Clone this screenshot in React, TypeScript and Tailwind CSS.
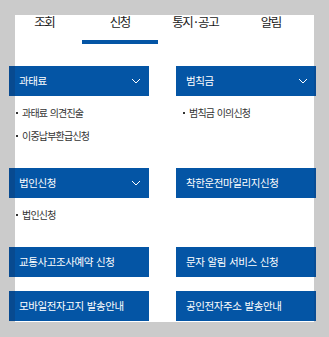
import React from "react"

const font = { fontFamily: '"Noto Sans CJK KR", "Noto Sans", sans-serif' }

function Chevron() {
  return (
    <svg className="h-[6px] w-[10px]" viewBox="0 0 10 6" fill="none" stroke="white" strokeWidth={1}>
      <path d="M1 1l4 4 4-4" />
    </svg>
  )
}

function Bar({ label, open = false, side }: { label: string; open?: boolean; side: "l" | "r" }) {
  return (
    <div
      className={`flex h-[30px] items-center justify-between bg-[#0455a5] text-[10.5px] tracking-[-0.4px] text-white [word-spacing:1px] ${
        side === "l" ? "border-l-[6px] border-[#084a90] pl-[4px] pr-[8px]" : "border-r-2 border-[#084d96] pl-[10px] pr-[6px]"
      }`}
    >
      <span>{label}</span>
      {open && <Chevron />}
    </div>
  )
}

function Items({ items }: { items: string[] }) {
  return (
    <ul className="pt-[5px] pb-[21px]">
      {items.map((item) => (
        <li key={item} className="flex h-[23px] items-center pl-[7px] text-[10px] tracking-[-0.8px] text-[#333] [word-spacing:1px]">
          <span className="mr-[4px] h-[2px] w-[2px] bg-[#333]" />
          {item}
        </li>
      ))}
    </ul>
  )
}

const tabs = ["조회", "신청", "통지·공고", "알림"]

export default function App() {
  return (
    <div className="h-[337px] w-[329px] overflow-hidden bg-[#cbcbcb] px-[15px] pt-[15px]" style={font}>
      <div className="h-[307px] w-[299px] bg-white">
        <nav className="-ml-[8.5px] flex">
          {tabs.map((tab, i) => (
            <div
              key={tab}
              className={`h-[29px] w-[75.5px] text-center text-[12.5px] leading-[13px] tracking-[-1.4px] text-[#1a1a1a] ${
                i === 1 ? "border-b-4 border-[#0455a5]" : ""
              }`}
            >
              {tab}
            </div>
          ))}
        </nav>

        <div className="-ml-[6px] mt-[22px] w-[307px]">
          <div className="grid grid-cols-[140px_140px] items-start gap-x-[27px]">
            <div>
              <Bar label="과태료" open side="l" />
              <Items items={["과태료 의견진술", "이중납부환급신청"]} />
            </div>
            <div>
              <Bar label="범칙금" open side="r" />
              <Items items={["범칙금 이의신청"]} />
            </div>
          </div>
          <div className="grid grid-cols-[140px_140px] items-start gap-x-[27px]">
            <div>
              <Bar label="법인신청" open side="l" />
              <Items items={["법인신청"]} />
            </div>
            <Bar label="착한운전마일리지신청" side="r" />
          </div>
          <div className="grid grid-cols-[140px_140px] gap-x-[27px] gap-y-[14px]">
            <Bar label="교통사고조사예약 신청" side="l" />
            <Bar label="문자 알림 서비스 신청" side="r" />
            <Bar label="모바일전자고지 발송안내" side="l" />
            <Bar label="공인전자주소 발송안내" side="r" />
          </div>
        </div>
      </div>
    </div>
  )
}
